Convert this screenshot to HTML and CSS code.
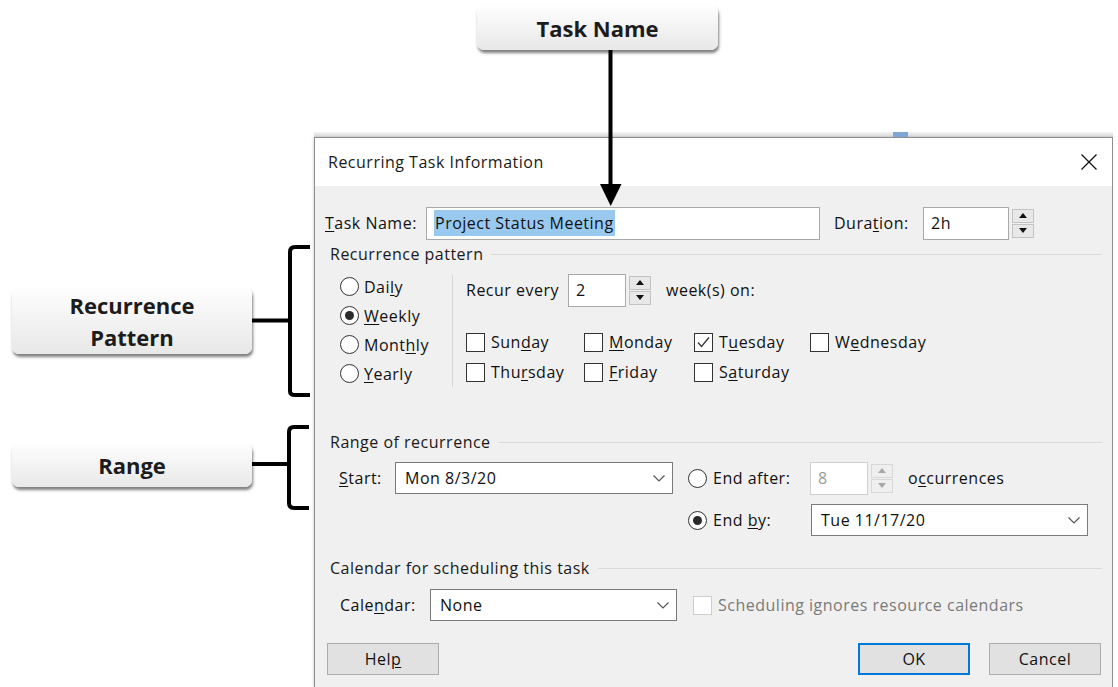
FILE: index.html
```html
<!DOCTYPE html>
<html lang="en">
<head>
<meta charset="utf-8">
<title>Recurring Task Information</title>
<link rel="stylesheet" href="styles.css">
</head>
<body>
<div class="stage">
  <div class="app-strip"><span class="strip-mark"></span></div>

  <div class="dialog">
    <div class="titlebar">
      <span class="title">Recurring Task Information</span>
      <svg class="close" width="16" height="16" viewBox="0 0 16 16"><path d="M0.5 0.5 L15.5 15.5 M15.5 0.5 L0.5 15.5" stroke="#111" stroke-width="1.3" fill="none"/></svg>
    </div>

    <div class="body">
      <div class="row row-task">
        <span class="lbl lbl-task"><u>T</u>ask Name:</span>
        <div class="field field-name"><span class="sel">Project Status Meeting</span></div>
        <span class="lbl lbl-dur">Dura<u>t</u>ion:</span>
        <div class="field field-dur">2h</div>
        <div class="spin">
          <span class="spin-btn"><svg width="8" height="5" viewBox="0 0 8 5"><path d="M0 5 L4 0 L8 5Z"/></svg></span>
          <span class="spin-btn"><svg width="8" height="5" viewBox="0 0 8 5"><path d="M0 0 L4 5 L8 0Z"/></svg></span>
        </div>
      </div>

      <section class="group group-recur">
        <div class="group-head"><span>Recurrence pattern</span><i class="rule"></i></div>
        <div class="recur-body">
          <div class="freq">
            <div class="opt"><span class="radio"></span><span>Dai<u>l</u>y</span></div>
            <div class="opt"><span class="radio on"></span><span><u>W</u>eekly</span></div>
            <div class="opt"><span class="radio"></span><span>Mont<u>h</u>ly</span></div>
            <div class="opt"><span class="radio"></span><span><u>Y</u>early</span></div>
          </div>
          <div class="vsep"></div>
          <div class="weekly">
            <div class="recur-row">
              <span class="lbl lbl-every">Recur every</span>
              <div class="field field-num">2</div>
              <div class="spin">
                <span class="spin-btn"><svg width="8" height="5" viewBox="0 0 8 5"><path d="M0 5 L4 0 L8 5Z"/></svg></span>
                <span class="spin-btn"><svg width="8" height="5" viewBox="0 0 8 5"><path d="M0 0 L4 5 L8 0Z"/></svg></span>
              </div>
              <span class="lbl lbl-weeks">week(s) on:</span>
            </div>
            <div class="days">
              <div class="opt"><span class="check"></span><span>Sun<u>d</u>ay</span></div>
              <div class="opt"><span class="check"></span><span><u>M</u>onday</span></div>
              <div class="opt"><span class="check"><svg width="17" height="17" viewBox="0 0 17 17"><path d="M3 8.5 L6.5 12.5 L14 3.5" stroke="#3a3a3a" stroke-width="1.4" fill="none"/></svg></span><span>T<u>u</u>esday</span></div>
              <div class="opt"><span class="check"></span><span>W<u>e</u>dnesday</span></div>
              <div class="opt"><span class="check"></span><span>Thu<u>r</u>sday</span></div>
              <div class="opt"><span class="check"></span><span><u>F</u>riday</span></div>
              <div class="opt"><span class="check"></span><span>S<u>a</u>turday</span></div>
            </div>
          </div>
        </div>
      </section>

      <section class="group group-range">
        <div class="group-head"><span>Range of recurrence</span><i class="rule"></i></div>
        <div class="range-body">
          <span class="lbl"><u>S</u>tart:</span>
          <div class="combo combo-start"><span>Mon 8/3/20</span><svg width="12" height="7" viewBox="0 0 12 7"><path d="M0.5 0.5 L6 6 L11.5 0.5" stroke="#555" stroke-width="1.2" fill="none"/></svg></div>
          <div class="end-row">
            <div class="opt end-opt"><span class="radio"></span><span>End after:</span></div>
            <div class="field field-num disabled">8</div>
            <div class="spin disabled">
              <span class="spin-btn"><svg width="8" height="5" viewBox="0 0 8 5"><path d="M0 5 L4 0 L8 5Z"/></svg></span>
              <span class="spin-btn"><svg width="8" height="5" viewBox="0 0 8 5"><path d="M0 0 L4 5 L8 0Z"/></svg></span>
            </div>
            <span class="lbl lbl-occ">o<u>c</u>currences</span>
          </div>
          <div class="end-row end-by">
            <div class="opt end-opt end-by-opt"><span class="radio on"></span><span>End <u>b</u>y:</span></div>
            <div class="combo combo-end"><span>Tue 11/17/20</span><svg width="12" height="7" viewBox="0 0 12 7"><path d="M0.5 0.5 L6 6 L11.5 0.5" stroke="#555" stroke-width="1.2" fill="none"/></svg></div>
          </div>
        </div>
      </section>

      <section class="group group-cal">
        <div class="group-head"><span>Calendar for scheduling this task</span><i class="rule"></i></div>
        <div class="cal-row">
          <span class="lbl lbl-cal">Cale<u>n</u>dar:</span>
          <div class="combo combo-cal"><span>None</span><svg width="12" height="7" viewBox="0 0 12 7"><path d="M0.5 0.5 L6 6 L11.5 0.5" stroke="#555" stroke-width="1.2" fill="none"/></svg></div>
          <div class="opt opt-ignore"><span class="check disabled"></span><span>Schedulin<u>g</u> ignores resource calendars</span></div>
        </div>
      </section>

      <div class="buttons">
        <button class="btn btn-help">Hel<u>p</u></button>
        <span class="btn-spacer"></span>
        <button class="btn btn-ok">OK</button>
        <button class="btn btn-cancel">Cancel</button>
      </div>
    </div>
  </div>

  <!-- annotation labels and their connectors -->
  <div class="callout callout-task">Task Name</div>
  <div class="callout callout-recur">Recurrence<br>Pattern</div>
  <div class="callout callout-range">Range</div>

  <svg class="marks" width="1118" height="687" viewBox="0 0 1118 687">
    <g stroke="#000" stroke-width="4" fill="none" stroke-linejoin="round">
      <path d="M610.5 50 V186"/>
      <path d="M310 247 H295 Q290 247 290 252 V391 Q290 395 295 395 H310"/>
      <path d="M252 320.5 H290"/>
      <path d="M309 427 H294 Q289 427 289 432 V503 Q289 508 294 508 H309"/>
      <path d="M252 464 H289"/>
    </g>
    <path d="M600 184 H621.5 L610.7 206 Z" fill="#000"/>
  </svg>
</div>
</body>
</html>
```

FILE: styles.css
```css
* { box-sizing: border-box; }

html, body {
  margin: 0;
  padding: 0;
  background: #fff;
}

body {
  font-family: "Open Sans", "Noto Sans", "Liberation Sans", sans-serif;
  font-size: 16px;
  letter-spacing: 0.5px;
  color: #111;
}

u { text-decoration: underline; text-underline-offset: 2px; text-decoration-thickness: 1px; }

.stage {
  position: relative;
  width: 1118px;
  height: 687px;
  overflow: hidden;
  background: #fff;
}

/* sliver of the application window behind the dialog */
.app-strip {
  display: flex;
  margin: 132px 0 0 314px;
  width: 799px;
  height: 5px;
  padding-left: 579px;
  background: linear-gradient(#f4f4f4, #d6d6d6);
}
.strip-mark {
  width: 15px;
  height: 5px;
  background: #7ea6d6;
}

/* dialog window */
.dialog {
  margin-left: 314px;
  width: 799px;
  height: 550px;
  border: 1px solid #8d8d8d;
  border-bottom: none;
  box-shadow: -1px 0 2px rgba(0, 0, 0, 0.12);
  display: flex;
  flex-direction: column;
}

.titlebar {
  height: 48px;
  background: #fff;
  display: flex;
  align-items: center;
  justify-content: space-between;
  padding: 0 15px 0 13px;
  flex: none;
}
.title { color: #1a1a1a; }

.body {
  flex: 1;
  background: #f0f0f0;
  padding: 20px 10px 0 10px;
}

.row, .recur-row, .end-row, .cal-row, .opt {
  display: flex;
  align-items: center;
}

.lbl { white-space: nowrap; }

/* text fields */
.field {
  height: 33px;
  background: #fff;
  border: 1px solid #a9a9a9;
  display: flex;
  align-items: center;
  padding-left: 7px;
}
.field.disabled { border-color: #cfcfcf; color: #9a9a9a; }

.row-task { height: 34px; }
.lbl-task { width: 101px; }
.field-name { width: 394px; }
.sel { background: #99c9ef; padding: 2px 1px; }
.lbl-dur { margin-left: 14px; width: 89px; }
.field-dur { width: 86px; }

/* spinner */
.spin {
  width: 22px;
  height: 29px;
  margin-left: 3px;
  display: flex;
  flex-direction: column;
  gap: 1px;
  flex: none;
}
.spin-btn {
  flex: 1;
  background: #e8e8e8;
  border: 1px solid #c3c3c3;
  display: flex;
  align-items: center;
  justify-content: center;
}
.spin-btn svg { fill: #111; }
.spin.disabled .spin-btn { background: #efefef; border-color: #d8d8d8; }
.spin.disabled .spin-btn svg { fill: #a8a8a8; }

/* group boxes */
.group { padding-left: 5px; }
.group-head {
  height: 20px;
  display: flex;
  align-items: center;
  gap: 8px;
  color: #1a1a1a;
}
.rule { flex: 1; height: 1px; background: #dadada; }

.group-recur { margin-top: 4px; }
.recur-body {
  height: 124px;
  display: flex;
  padding-left: 10px;
}
.freq { width: 112px; padding-top: 8px; flex: none; }
.freq .opt { height: 29px; gap: 5px; }
.vsep { width: 1px; height: 112px; margin-top: 11px; background: #d6d6d6; flex: none; }
.weekly { margin-left: 13px; padding-top: 9px; }
.recur-row { height: 34px; }
.lbl-every { width: 102px; }
.field-num { width: 58px; }
.lbl-weeks { margin-left: 15px; }

.days {
  margin-top: 20px;
  display: grid;
  grid-template-columns: 118px 110px 116px auto;
  grid-auto-rows: 30px;
}
.days .opt { gap: 6px; }

.radio {
  width: 19px;
  height: 19px;
  border: 1px solid #333;
  border-radius: 50%;
  background: #fff;
  display: flex;
  align-items: center;
  justify-content: center;
  flex: none;
}
.radio.on::after {
  content: "";
  width: 9px;
  height: 9px;
  border-radius: 50%;
  background: #2b2b2b;
}

.check {
  width: 19px;
  height: 19px;
  border: 1px solid #333;
  background: #fff;
  display: flex;
  align-items: center;
  justify-content: center;
  flex: none;
}
.check.disabled { border-color: #cdcdcd; }

/* range of recurrence */
.group-range { margin-top: 44px; }
.range-body {
  margin-top: 10px;
  padding-left: 9px;
  display: grid;
  grid-template-columns: 56px 278px auto;
  grid-template-rows: 32px 32px;
  row-gap: 10px;
  align-items: center;
}
.combo {
  height: 32px;
  background: #fff;
  border: 1px solid #7a7a7a;
  display: flex;
  align-items: center;
  justify-content: space-between;
  padding: 0 7px 0 9px;
}
.end-row { margin-left: 15px; height: 32px; }
.end-by { grid-column: 3; grid-row: 2; }
.end-opt { width: 122px; gap: 6px; }
.end-by-opt { width: 123px; }
.lbl-occ { margin-left: 15px; }
.combo-end { width: 277px; }

/* calendar */
.group-cal { margin-top: 22px; }
.cal-row { margin-top: 11px; height: 32px; padding-left: 10px; }
.lbl-cal { width: 90px; }
.combo-cal { width: 247px; }
.opt-ignore { margin-left: 16px; gap: 6px; color: #7a7a7a; }

/* dialog buttons */
.buttons {
  margin-top: 22px;
  display: flex;
  padding-left: 2px;
  padding-right: 1px;
}
.btn {
  width: 112px;
  height: 32px;
  font: inherit;
  letter-spacing: inherit;
  color: #111;
  background: #e1e1e1;
  border: 1px solid #adadad;
  padding: 0;
}
.btn-spacer { flex: 1; }
.btn-ok { border: 2px solid #0078d7; }
.btn-cancel { margin-left: 19px; }

/* annotation callouts */
.callout {
  position: absolute;
  width: 240px;
  display: flex;
  align-items: center;
  justify-content: center;
  text-align: center;
  font-weight: 700;
  font-size: 22px;
  letter-spacing: 0;
  line-height: 32px;
  color: #1c1c1c;
  border-radius: 7px;
  background: linear-gradient(#fefefe, #e8e8e8);
  box-shadow: 1px 3px 3px rgba(0, 0, 0, 0.5);
}
.callout-task { left: 477px; top: 5px; width: 241px; height: 45px; }
.callout-recur { left: 12px; top: 287px; height: 67px; }
.callout-range { left: 12px; top: 443px; height: 44px; }

.marks {
  position: absolute;
  left: 0;
  top: 0;
  pointer-events: none;
}
```
